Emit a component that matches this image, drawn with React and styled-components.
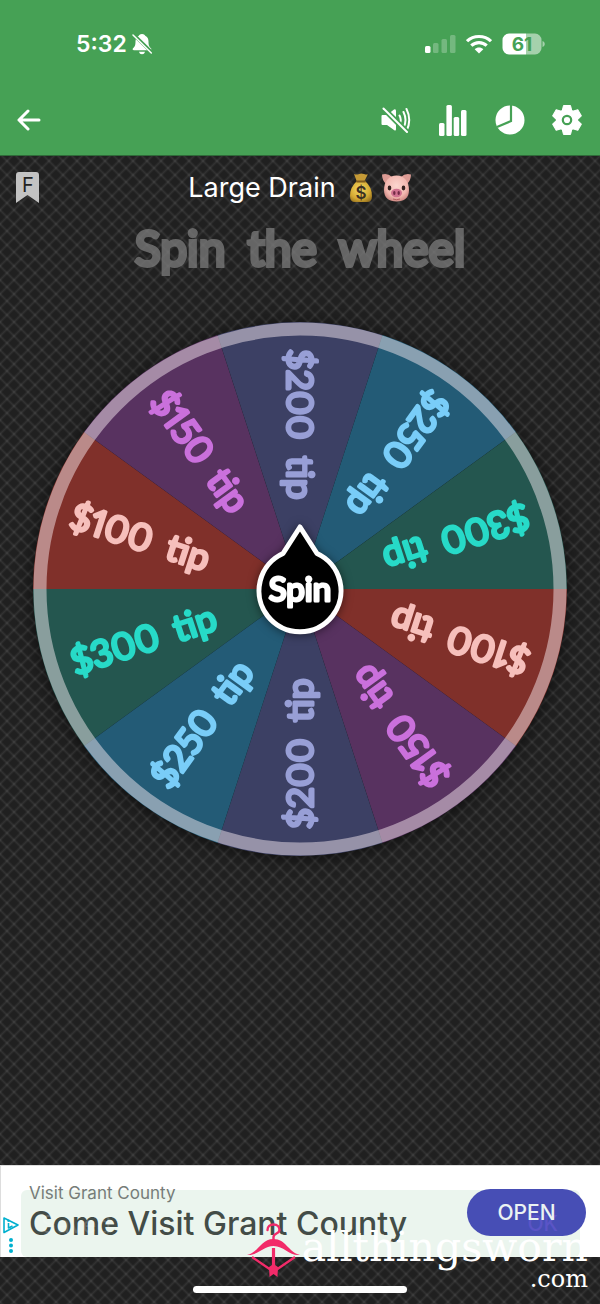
import React from "react";
import styled, { createGlobalStyle } from "styled-components";

const GlobalStyle = createGlobalStyle`
  *, *::before, *::after { box-sizing: border-box; }
  body { margin: 0; background: #222; }
  button { border: 0; padding: 0; background: none; color: inherit; font: inherit; cursor: pointer; }
`;

const hatch = (angle) => `linear-gradient(${angle}deg,
  rgba(255, 255, 255, 0.08) 0, transparent 10%, transparent 40%,
  rgba(255, 255, 255, 0.08) 50%, transparent 60%, transparent 90%,
  rgba(255, 255, 255, 0.08) 100%)`;

const Screen = styled.div`
  position: relative;
  display: flex;
  flex-direction: column;
  min-height: 100vh;
  color: #fff;
  font-family: Inter, "Liberation Sans", sans-serif;
  background-color: #202020;
  background-image: ${hatch(45)}, ${hatch(-45)};
  background-size: 14px 14px;
`;

const Header = styled.header`
  background: #46a155;
  border-bottom: 1px solid #2f6b39;
`;

const StatusBar = styled.div`
  display: flex;
  align-items: center;
  justify-content: space-between;
  height: 88px;
  padding: 0 55px 0 76px;
`;

const StatusGroup = styled.div`
  display: flex;
  align-items: center;
  gap: ${(p) => p.$gap}px;
`;

const Clock = styled.time`
  font-size: 23px;
  line-height: 28px;
  font-weight: 600;
`;

const Toolbar = styled.nav`
  display: flex;
  align-items: center;
  justify-content: space-between;
  height: 67px;
  padding: 0 12px 4px 8px;
`;

const Actions = styled.div`
  display: flex;
  gap: 15px;
`;

const IconButton = styled.button`
  display: grid;
  place-items: center;
  width: 42px;
  height: 42px;
`;

const TitleRow = styled.div`
  display: grid;
  grid-template-columns: 48px 1fr 48px;
  align-items: center;
  height: 64px;
`;

const Flag = styled.button`
  display: grid;
  place-items: center;
  width: 54px;
  height: 44px;
`;

const Title = styled.h1`
  display: flex;
  align-items: center;
  justify-content: center;
  gap: 8px;
  margin: 0;
  font-size: 27px;
  line-height: 36px;
  font-weight: 400;
`;

const TitleText = styled.span`
  margin-right: 5px;
`;

const Result = styled.p`
  display: flex;
  justify-content: center;
  gap: 22px;
  margin: 0;
  font-family: Lato, sans-serif;
  font-size: 48px;
  line-height: 56px;
  font-weight: 400;
  color: #7c7c7c;
  -webkit-text-stroke: 4px #7c7c7c;
  stroke-linejoin: round;
  opacity: 0.75;
`;

const Main = styled.main`
  flex: 1;
`;

const WheelArea = styled.section`
  position: relative;
  max-width: 720px;
  margin: 46px auto 0;
  padding: 0 33px;
`;

const WheelSvg = styled.svg`
  display: block;
  width: 100%;
  height: auto;
  overflow: visible;
  filter: drop-shadow(0 2px 8px rgba(0, 0, 0, 0.6));
`;

const SliceLabel = styled.text`
  font-family: Lato, sans-serif;
  font-size: 37px;
  font-weight: 400;
  font-variant-numeric: proportional-nums;
  stroke-width: 3px;
  stroke-linejoin: round;
`;

const SpinButton = styled.button`
  position: absolute;
  inset: 0;
  width: 96px;
  height: 120px;
  margin: auto;
`;

const SpinShape = styled.svg`
  display: block;
  overflow: visible;
  filter: drop-shadow(0 1px 5px rgba(0, 0, 0, 0.5));
`;

const SpinText = styled.text`
  font-family: Lato, sans-serif;
  font-size: 33px;
  font-weight: 400;
  stroke-width: 3px;
  stroke-linejoin: round;
`;

const Ad = styled.aside`
  display: flex;
  height: 92px;
  border-top: 1px solid #ddd;
  border-left: 1px solid #ddd;
  background: #fff;
`;

const AdMarks = styled.div`
  display: flex;
  flex-direction: column;
  justify-content: flex-end;
  align-items: center;
  width: 20px;
  padding-bottom: 4px;
`;

const AdCard = styled.div`
  display: flex;
  flex: 1;
  justify-content: space-between;
  align-items: flex-start;
  margin: 24px 20px 0 0;
  border-radius: 6px;
  background: #ebf5ee;
`;

const AdCopy = styled.a`
  position: relative;
  display: flex;
  flex-direction: column;
  padding-left: 8px;
  margin-top: -9px;
  color: #434c47;
  text-decoration: none;
  white-space: nowrap;
`;

const Advertiser = styled.span`
  font-size: 17px;
  line-height: 24px;
  color: #767d79;
`;

const Headline = styled.span`
  font-size: 32px;
  line-height: 38px;
  font-weight: 500;
`;

const SavedGhost = styled.span`
  position: absolute;
  left: 20px;
  bottom: 3px;
  font-size: 24px;
  line-height: 30px;
  color: rgba(255, 255, 255, 0.16);
`;

const OpenButton = styled.button`
  position: relative;
  width: 119px;
  height: 47px;
  margin: -1px -6px 0 0;
  border-radius: 24px;
  background: #474eb5;
  color: #eaf3f2;
  font-size: 21px;
  font-weight: 500;
  line-height: 46px;
`;

const OkGhost = styled.span`
  position: absolute;
  right: 28px;
  bottom: 0;
  font-size: 21px;
  line-height: 24px;
  color: #5a55c6;
`;

const OpenText = styled.span`
  position: relative;
`;

const HomeArea = styled.footer`
  display: flex;
  justify-content: center;
  align-items: flex-end;
  height: 47px;
  padding-bottom: 11px;
`;

const HomeBar = styled.div`
  width: 214px;
  height: 7px;
  border-radius: 4px;
  background: #fff;
`;

const Watermark = styled.div`
  position: absolute;
  right: 12px;
  bottom: 17px;
  display: flex;
  align-items: flex-start;
  gap: 2px;
  font-family: "DejaVu Serif", serif;
  color: #fff;
  pointer-events: none;
`;

const Brand = styled.div`
  display: flex;
  flex-direction: column;
  align-items: flex-end;
  font-size: 41px;
  line-height: 48px;
`;

const BrandSuffix = styled.span`
  font-size: 24px;
  line-height: 16px;
`;

const SLICES = [
  { name: "$300", angle: -18, fill: "#24564f", ink: "#27dac8" },
  { name: "$100", angle: 18, fill: "#80302a", ink: "#f6bfbb" },
  { name: "$150", angle: 54, fill: "#583260", ink: "#ca70dc" },
  { name: "$200", angle: 90, fill: "#3c4064", ink: "#989fd6" },
  { name: "$250", angle: 126, fill: "#235b76", ink: "#79cdf8" },
  { name: "$300", angle: 162, fill: "#24564f", ink: "#27dac8" },
  { name: "$100", angle: 198, fill: "#80302a", ink: "#f6bfbb" },
  { name: "$150", angle: 234, fill: "#583260", ink: "#ca70dc" },
  { name: "$200", angle: 270, fill: "#3c4064", ink: "#989fd6" },
  { name: "$250", angle: 306, fill: "#235b76", ink: "#79cdf8" },
];

const R = 267;
const HALF = Math.PI / 10;
const wedge = `M0 0L${-R * Math.cos(HALF)} ${R * Math.sin(HALF)}A${R} ${R} 0 0 1 ${-R * Math.cos(HALF)} ${-R * Math.sin(HALF)}Z`;

function Wheel() {
  return (
    <WheelSvg viewBox="-267 -267 534 534" role="img" aria-label="Prize wheel">
      {SLICES.map((s) => (
        <g key={s.angle} transform={`rotate(${s.angle})`}>
          <path d={wedge} fill={s.fill} />
          <SliceLabel y="13" fill={s.ink} stroke={s.ink}>
            <tspan x="-240">{s.name}</tspan>
            <tspan dx="7"> tip</tspan>
          </SliceLabel>
        </g>
      ))}
      <circle r="260" fill="none" stroke="#f8ecf2" strokeOpacity="0.48" strokeWidth="13" />
    </WheelSvg>
  );
}

function BellOff() {
  return (
    <svg width="20" height="22" viewBox="0 0 20 22" aria-hidden="true">
      <path d="M10 1C7.800 1 7 2.300 6.800 2.800C4.500 3.700 3.500 6 3.500 8.500C3.500 12.500 2.800 13.500 1 15.300C.3 16.200 .5 17.200 2 17.200H18C19.500 17.200 19.700 16.200 19 15.300C17.200 13.500 16.500 12.500 16.500 8.500C16.500 6 15.500 3.700 13.200 2.800C13 2.300 12.200 1 10 1ZM7 18.700H13C12.600 20.400 11.500 21.200 10 21.200C8.500 21.200 7.400 20.400 7 18.700Z" fill="#fff" />
      <path d="M1 1L21 20.500" stroke="#46a155" strokeWidth="3.400" />
      <path d="M1 2L19.300 20" stroke="#fff" strokeWidth="1.500" strokeLinecap="round" />
    </svg>
  );
}

function Signal() {
  return (
    <svg width="31" height="20" viewBox="0 0 31 20" fill="#fff" aria-hidden="true">
      <rect x="0" y="12" width="5.500" height="7" rx="1.500" />
      <rect x="8" y="9" width="5.500" height="10" rx="1.500" opacity=".25" />
      <rect x="16.500" y="5" width="5.500" height="14" rx="1.500" opacity=".25" />
      <rect x="25" y="1" width="5.500" height="18" rx="1.500" opacity=".25" />
    </svg>
  );
}

function Wifi() {
  return (
    <svg width="26" height="20" viewBox="0 0 26 20" fill="none" stroke="#fff" strokeWidth="3.200" aria-hidden="true">
      <path d="M1 7.200C7.500.9 18.500.9 25 7.200" />
      <path d="M5.300 11.700C9.600 7.600 16.400 7.600 20.700 11.700" />
      <path d="M13 19.500L8.700 15.200C11 13 15 13 17.300 15.200Z" fill="#fff" stroke="none" />
    </svg>
  );
}

function Battery() {
  return (
    <svg width="43" height="22" viewBox="0 0 43 22" role="img" aria-label="Battery 61">
      <path d="M7 .5H24V21.500H7A6.500 6.500 0 0 1 .5 15V7A6.500 6.500 0 0 1 7 .5Z" fill="#fff" />
      <path d="M24 .5H33A6.500 6.500 0 0 1 39.500 7V15A6.500 6.500 0 0 1 33 21.500H24ZM40.500 8C43.500 9 43.500 13 40.500 14Z" fill="#a5d1ac" />
      <text x="20" y="18" textAnchor="middle" fontFamily="Inter, sans-serif" fontSize="19" fontWeight="700" fill="#46a155">61</text>
    </svg>
  );
}

function Back() {
  return (
    <svg width="24" height="22" viewBox="0 0 24 22" fill="none" stroke="#fff" strokeWidth="3" strokeLinecap="round" strokeLinejoin="round" aria-hidden="true">
      <path d="M22 11H2M11 2L2 11L11 20" />
    </svg>
  );
}

function SoundOff() {
  return (
    <svg width="30" height="26" viewBox="0 0 30 26" fill="none" stroke="#fff" strokeWidth="2" strokeLinecap="round" aria-hidden="true">
      <path d="M1.500 8H6L13 2.500Q15 1.500 15 4V22Q15 24.500 13 23L6 18H1.500Q.5 18 .5 17V9Q.5 8 1.500 8Z" fill="#fff" stroke="none" />
      <path d="M18.500 8.500Q21 13 18.500 17.500M22.500 5Q26.500 13 22.500 21M25.500 2Q31 13 25.500 24" />
      <path d="M2.500 1.500L26 25" stroke="#46a155" strokeWidth="5.500" />
      <path d="M2.500 1.500L26 25" />
    </svg>
  );
}

function Bars() {
  return (
    <svg width="28" height="32" viewBox="0 0 28 32" fill="#fff" aria-hidden="true">
      <rect x="0" y="19" width="5.500" height="13" rx="1.500" />
      <rect x="7.400" y="1" width="5.500" height="31" rx="1.500" />
      <rect x="14.700" y="13" width="5.500" height="19" rx="1.500" />
      <rect x="22" y="6" width="5.500" height="26" rx="1.500" />
    </svg>
  );
}

function Pie() {
  return (
    <svg width="30" height="30" viewBox="0 0 30 30" aria-hidden="true">
      <circle cx="15" cy="15" r="14.500" fill="#fff" />
      <path d="M16 0V16L2 22" fill="none" stroke="#46a155" strokeWidth="2.200" />
    </svg>
  );
}

function Gear() {
  return (
    <svg width="30" height="30" viewBox="0 0 30 30" aria-hidden="true">
      <g fill="#fff">
        <circle cx="15" cy="15" r="11" />
        {[0, 60, 120].map((a) => (
          <path key={a} transform={`rotate(${a} 15 15)`} d="M11.500 .5H18.500L20 6.500V23.500L18.500 29.500H11.500L10 23.500V6.500Z" stroke="#fff" strokeWidth="1" strokeLinejoin="round" />
        ))}
      </g>
      <circle cx="15" cy="15" r="4.200" fill="#fff" stroke="#46a155" strokeWidth="2.200" />
    </svg>
  );
}

function Bookmark() {
  return (
    <svg width="23" height="32" viewBox="0 0 23 32" aria-hidden="true">
      <path d="M3 0H20Q23 0 23 3V31L11.500 23L0 31V3Q0 0 3 0Z" fill="#c3c3c3" />
      <text x="12" y="20" textAnchor="middle" fontFamily="Inter, sans-serif" fontSize="20" fill="#222">F</text>
    </svg>
  );
}

function MoneyBag() {
  return (
    <svg width="24" height="30" viewBox="0 0 24 30" role="img" aria-label="money bag">
      <defs>
        <radialGradient id="gold" cx=".45" cy=".4" r=".7">
          <stop offset="0" stopColor="#f6da64" />
          <stop offset=".65" stopColor="#d5aa33" />
          <stop offset="1" stopColor="#94701f" />
        </radialGradient>
      </defs>
      <path d="M5 1Q8 2 10 1T15 1T19 1L15 9H8Z" fill="#c59a36" />
      <path d="M8 8H16Q23 14 23 23Q23 29 18 29H6Q1 29 1 23Q1 14 8 8Z" fill="url(#gold)" />
      <path d="M8 8.500H16" stroke="#7e5b1e" strokeWidth="2" strokeLinecap="round" />
      <text x="12" y="25.500" textAnchor="middle" fontFamily="Inter, sans-serif" fontSize="17" fontWeight="600" fill="#3b3022">$</text>
    </svg>
  );
}

function Pig() {
  return (
    <svg width="31" height="30" viewBox="0 0 31 30" role="img" aria-label="pig face">
      <defs>
        <radialGradient id="skin" cx=".5" cy=".4" r=".6">
          <stop offset="0" stopColor="#fbd6cf" />
          <stop offset=".7" stopColor="#f2b8b0" />
          <stop offset="1" stopColor="#cf8a85" />
        </radialGradient>
      </defs>
      <path d="M1 1.500Q7 0 11 4L5 11Q1 7 1 1.500ZM30 1.500Q24 0 20 4L26 11Q30 7 30 1.500Z" fill="#dc9b94" />
      <path d="M15.500 2.500C23 2.500 28 8 28 17C28 25 23 28.500 15.500 28.500S3 25 3 17C3 8 8 2.500 15.500 2.500Z" fill="url(#skin)" />
      <ellipse cx="8.500" cy="15" rx="1.800" ry="2.400" fill="#33211f" />
      <ellipse cx="22.500" cy="15" rx="1.800" ry="2.400" fill="#33211f" />
      <ellipse cx="15.500" cy="20" rx="5.500" ry="4.200" fill="#d0718f" />
      <ellipse cx="13.300" cy="20" rx="1.200" ry="1.900" fill="#722a45" />
      <ellipse cx="17.700" cy="20" rx="1.200" ry="1.900" fill="#722a45" />
      <path d="M12 26Q15.500 27.500 19 26" fill="none" stroke="#b25d62" />
    </svg>
  );
}

function AdChoices() {
  return (
    <svg width="16" height="36" viewBox="0 0 16 36" fill="none" stroke="#00b0cf" strokeWidth="1.600" strokeLinejoin="round" aria-hidden="true">
      <path d="M1 1L15 8L1 15.500Z" />
      <path d="M5.500 6V11L9.500 9" />
      <circle cx="5.500" cy="3.800" r=".4" />
      <g fill="#00b0cf" stroke="none">
        <circle cx="8" cy="23" r="2" />
        <circle cx="8" cy="28.500" r="2" />
        <circle cx="8" cy="34" r="2" />
      </g>
    </svg>
  );
}

function Hanger() {
  return (
    <svg width="53" height="54" viewBox="0 0 53 54" fill="none" stroke="#f22b69" strokeWidth="2.400" aria-hidden="true">
      <path d="M20.500 7C20.500 3.500 23 1.500 26.500 1.500C30.500 1.500 32.500 4 32.500 7C32.500 11 26.500 10 26.500 14V18" strokeLinecap="round" />
      <path d="M0 32C12 29 14 16 26.500 16S41 29 53 32C42 33 37 23 26.500 23S11 33 0 32Z" fill="#f22b69" stroke="none" />
      <path d="M5 34L24 47M48 34L29 47" />
      <path d="M26.500 25V44" strokeWidth="3.200" />
      <path d="M22 44L26.500 41L31 44L30.500 54L26.500 51L22.500 54Z" fill="#f22b69" stroke="none" />
    </svg>
  );
}

export default function App() {
  return (
    <Screen>
      <GlobalStyle />
      <Header>
        <StatusBar>
          <StatusGroup $gap={5}>
            <Clock>5:32</Clock>
            <BellOff />
          </StatusGroup>
          <StatusGroup $gap={10}>
            <Signal />
            <Wifi />
            <Battery />
          </StatusGroup>
        </StatusBar>
        <Toolbar>
          <IconButton aria-label="Back"><Back /></IconButton>
          <Actions>
            <IconButton aria-label="Sound off"><SoundOff /></IconButton>
            <IconButton aria-label="Statistics"><Bars /></IconButton>
            <IconButton aria-label="Wheels"><Pie /></IconButton>
            <IconButton aria-label="Settings"><Gear /></IconButton>
          </Actions>
        </Toolbar>
      </Header>
      <Main>
        <TitleRow>
          <Flag aria-label="Bookmark"><Bookmark /></Flag>
          <Title>
            <TitleText>Large Drain</TitleText>
            <MoneyBag />
            <Pig />
          </Title>
        </TitleRow>
        <Result>
          <span>Spin</span>
          <span>the</span>
          <span>wheel</span>
        </Result>
        <WheelArea>
          <Wheel />
          <SpinButton>
            <SpinShape width="96" height="120" viewBox="-48 -60 96 120">
              <path d="M0 -62L17 -35.500A41 41 0 1 1 -17 -35.500Z" fill="#000" stroke="#fff" strokeWidth="5" strokeLinejoin="round" />
              <SpinText y="12" textAnchor="middle" fill="#fff" stroke="#fff">Spin</SpinText>
            </SpinShape>
          </SpinButton>
        </WheelArea>
      </Main>
      <Ad>
        <AdMarks><AdChoices /></AdMarks>
        <AdCard>
          <AdCopy href="#visit">
            <Advertiser>Visit Grant County</Advertiser>
            <Headline>Come Visit Grant County</Headline>
            <SavedGhost aria-hidden="true">Saved</SavedGhost>
          </AdCopy>
          <OpenButton>
            <OkGhost aria-hidden="true">OK</OkGhost>
            <OpenText>OPEN</OpenText>
          </OpenButton>
        </AdCard>
      </Ad>
      <HomeArea><HomeBar /></HomeArea>
      <Watermark>
        <Hanger />
        <Brand>
          <span>allthingsworn</span>
          <BrandSuffix>.com</BrandSuffix>
        </Brand>
      </Watermark>
    </Screen>
  );
}
